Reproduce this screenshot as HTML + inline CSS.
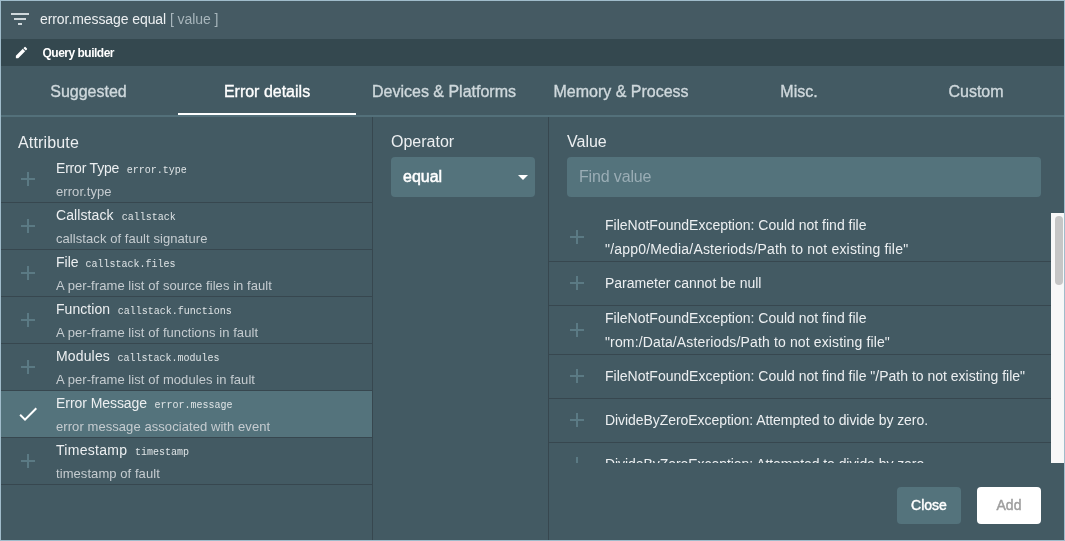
<!DOCTYPE html>
<html><head><meta charset="utf-8">
<style>
*{margin:0;padding:0;box-sizing:border-box}
html,body{width:1065px;height:541px;overflow:hidden;background:#a0bccb}
body{font-family:"Liberation Sans",sans-serif;position:relative}
.frame{position:absolute;left:1px;top:1px;width:1063px;height:539px;background:#435a63;overflow:hidden;will-change:transform}
.abs{position:absolute;white-space:nowrap}
.topbar{position:absolute;left:0;top:0;width:1063px;height:38px;background:#455a63}
.qb{position:absolute;left:0;top:38px;width:1063px;height:27px;background:#34484f}
.tab{position:absolute;top:67px;height:48px;line-height:48px;text-align:center;font-size:16px;color:#cfd8dc;white-space:nowrap;-webkit-text-stroke:0.35px currentColor}
.tabline{position:absolute;left:0;top:114px;width:1063px;height:2px;background:#53707a}
.ul{position:absolute;left:177px;top:112px;width:178px;height:2px;background:#fff}
.vline{position:absolute;top:116px;width:1px;height:423px;background:#37474f}
.hdr{position:absolute;font-size:16px;color:#eceff1;line-height:20px;white-space:nowrap}
.row{position:absolute;left:0;width:371px;height:47px;border-bottom:1px solid #37474f}
.plus{position:absolute;width:14px;height:14px}
.plus:before{content:"";position:absolute;left:0;top:6.25px;width:14px;height:1.5px;background:#5b7a84}
.plus:after{content:"";position:absolute;left:6.25px;top:0;width:1.5px;height:14px;background:#5b7a84}
.row .plus{left:20px;top:16px}
.rt{position:absolute;left:55px;top:3px;font-size:14px;line-height:18px;color:#eceff1;white-space:nowrap}
.rc{position:absolute;top:8px;font-family:"Liberation Mono",monospace;font-size:10px;line-height:14px;color:#dfe4e6;white-space:nowrap}
.rd{position:absolute;left:55px;top:28px;font-size:13px;line-height:16px;color:#c5ccd0;letter-spacing:0.07px;white-space:nowrap}
.sel{background:#54737c}
.list{position:absolute;left:548px;top:212px;width:502px;height:250px;overflow:hidden}
.vrow{position:absolute;left:0;width:502px;border-bottom:1px solid #37474f}
.vrow .plus{left:21px}
.vt{position:absolute;left:56px;font-size:14px;color:#eceff1;white-space:nowrap;line-height:24px}
</style></head>
<body>
<div class="frame">
  <div class="topbar"></div>
  <svg class="abs" style="left:7px;top:6px" width="24" height="24" viewBox="0 0 24 24">
    <path d="M10 18h4v-2h-4v2zM3 6v2h18V6H3zm3 7h12v-2H6v2z" fill="#cfd8dc"/>
  </svg>
  <div class="abs" style="left:39px;top:9px;font-size:14px;line-height:18px;color:#eceff1;letter-spacing:-0.08px">error.message equal <span style="color:#a7b5bb">[ value ]</span></div>

  <div class="qb"></div>
  <svg class="abs" style="left:12.5px;top:44px" width="15" height="15" viewBox="0 0 24 24">
    <path d="M3 17.25V21h3.75L17.81 9.94l-3.75-3.75L3 17.25zM20.71 7.04a1 1 0 0 0 0-1.41l-2.34-2.34a1 1 0 0 0-1.41 0l-1.83 1.83 3.75 3.75 1.83-1.83z" fill="#fff"/>
  </svg>
  <div class="abs" style="left:41.5px;top:45px;font-size:12px;line-height:14px;font-weight:bold;letter-spacing:-0.5px;color:#fff">Query builder</div>

  <div class="tab" style="left:-1px;width:177px">Suggested</div>
  <div class="tab" style="left:177px;width:178px;color:#fff">Error details</div>
  <div class="tab" style="left:354px;width:178px">Devices &amp; Platforms</div>
  <div class="tab" style="left:531px;width:178px">Memory &amp; Process</div>
  <div class="tab" style="left:709px;width:178px">Misc.</div>
  <div class="tab" style="left:886px;width:178px">Custom</div>
  <div class="tabline"></div>
  <div class="ul"></div>

  <div class="vline" style="left:371px"></div>
  <div class="vline" style="left:547px"></div>

  <div class="hdr" style="left:17px;top:132px;letter-spacing:0.15px">Attribute</div>

  <div class="row" style="top:155px"><div class="plus"></div><div class="rt" style="letter-spacing:-0.2px">Error Type</div><div class="rc" style="left:125.8px">error.type</div><div class="rd">error.type</div></div>
  <div class="row" style="top:202px"><div class="plus"></div><div class="rt" style="letter-spacing:0.1px">Callstack</div><div class="rc" style="left:120.7px">callstack</div><div class="rd">callstack of fault signature</div></div>
  <div class="row" style="top:249px"><div class="plus"></div><div class="rt" style="letter-spacing:0px">File</div><div class="rc" style="left:84.6px">callstack.files</div><div class="rd">A per-frame list of source files in fault</div></div>
  <div class="row" style="top:296px"><div class="plus"></div><div class="rt" style="letter-spacing:0.06px">Function</div><div class="rc" style="left:116.8px">callstack.functions</div><div class="rd">A per-frame list of functions in fault</div></div>
  <div class="row" style="top:343px"><div class="plus"></div><div class="rt" style="letter-spacing:0.15px">Modules</div><div class="rc" style="left:116.5px">callstack.modules</div><div class="rd">A per-frame list of modules in fault</div></div>
  <div class="row sel" style="top:390px"><svg class="abs" style="left:15px;top:11px" width="24" height="24" viewBox="0 0 24 24"><path d="M9 16.17L4.83 12l-1.42 1.41L9 19 21 7l-1.41-1.41z" fill="#fff"/></svg><div class="rt" style="letter-spacing:-0.06px">Error Message</div><div class="rc" style="left:153.5px">error.message</div><div class="rd">error message associated with event</div></div>
  <div class="row" style="top:437px"><div class="plus"></div><div class="rt" style="letter-spacing:0.28px">Timestamp</div><div class="rc" style="left:134.0px">timestamp</div><div class="rd">timestamp of fault</div></div>

  <div class="hdr" style="left:390px;top:131px">Operator</div>
  <div class="abs" style="left:390px;top:156px;width:144px;height:40px;background:#54737c;border-radius:4px"></div>
  <div class="abs" style="left:402px;top:166px;font-size:16px;line-height:20px;-webkit-text-stroke:0.5px #fff;color:#fff">equal</div>
  <svg class="abs" style="left:517px;top:174px" width="10" height="5" viewBox="0 0 10 5"><path d="M0 0h10L5 5z" fill="#fff"/></svg>

  <div class="hdr" style="left:566px;top:131px">Value</div>
  <div class="abs" style="left:566px;top:156px;width:474px;height:40px;background:#54737c;border-radius:4px"></div>
  <div class="abs" style="left:578px;top:166px;font-size:16px;line-height:20px;color:#9aadb5;letter-spacing:-0.15px">Find value</div>

  <div class="list">
    <div class="vrow" style="top:0;height:49px"><div class="plus" style="top:17px"></div><div class="vt" style="top:0px">FileNotFoundException: Could not find file<br><span style="letter-spacing:0.19px">"/app0/Media/Asteriods/Path to not existing file"</span></div></div>
    <div class="vrow" style="top:49px;height:44px"><div class="plus" style="top:14px"></div><div class="vt" style="top:9px">Parameter cannot be null</div></div>
    <div class="vrow" style="top:93px;height:49px"><div class="plus" style="top:17px"></div><div class="vt" style="top:0px">FileNotFoundException: Could not find file<br><span style="letter-spacing:0.14px">"rom:/Data/Asteriods/Path to not existing file"</span></div></div>
    <div class="vrow" style="top:142px;height:44px"><div class="plus" style="top:14px"></div><div class="vt" style="top:9px">FileNotFoundException: Could not find file "/Path to not existing file"</div></div>
    <div class="vrow" style="top:186px;height:44px"><div class="plus" style="top:14px"></div><div class="vt" style="top:9px;letter-spacing:-0.06px">DivideByZeroException: Attempted to divide by zero.</div></div>
    <div class="vrow" style="top:230px;height:44px"><div class="plus" style="top:14px"></div><div class="vt" style="top:9px;letter-spacing:-0.06px">DivideByZeroException: Attempted to divide by zero.</div></div>
  </div>
  <div class="abs" style="left:1050px;top:212px;width:13px;height:250px;background:#f8f8f8"></div>
  <div class="abs" style="left:1054px;top:215px;width:8px;height:69px;background:#c6c6c6;border-radius:4px"></div>

  <div class="abs" style="left:896px;top:486px;width:64px;height:37px;background:#54737c;border-radius:4px;color:#fff;font-size:14px;-webkit-text-stroke:0.45px #fff;text-align:center;line-height:37px">Close</div>
  <div class="abs" style="left:976px;top:486px;width:64px;height:37px;background:#fff;border-radius:4px;color:#9e9e9e;font-size:14px;-webkit-text-stroke:0.45px #9e9e9e;text-align:center;line-height:37px">Add</div>
</div>
</body></html>
